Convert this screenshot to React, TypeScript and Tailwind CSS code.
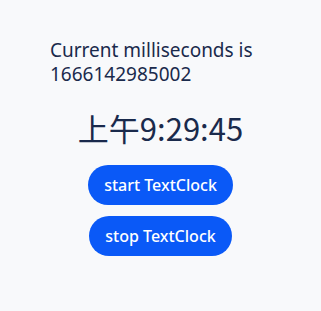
export default function App() {
  return (
    <div className="w-[321px] h-[311px] bg-[#f8f9fb] text-[#1a2a4c]" style={{ fontFamily: '"Noto Sans", "Noto Sans CJK SC", sans-serif' }}>
      <div className="pt-[38px] pl-[50px] text-[19px] leading-[24px]">
        <div>Current milliseconds is</div>
        <div>1666142985002</div>
      </div>
      <div className="mt-[22px] flex justify-center text-[31px] leading-[40px] font-normal" style={{ fontFamily: '"Noto Sans CJK SC", sans-serif' }}>
        上午9:29:45
      </div>
      <div className="mt-[17px] flex flex-col items-center gap-[11px]">
        <button className="h-[40px] px-[16px] rounded-full bg-[#0a59f7] text-white text-[16px] font-medium">start TextClock</button>
        <button className="h-[40px] px-[16px] rounded-full bg-[#0a59f7] text-white text-[16px] font-medium">stop TextClock</button>
      </div>
    </div>
  );
}
